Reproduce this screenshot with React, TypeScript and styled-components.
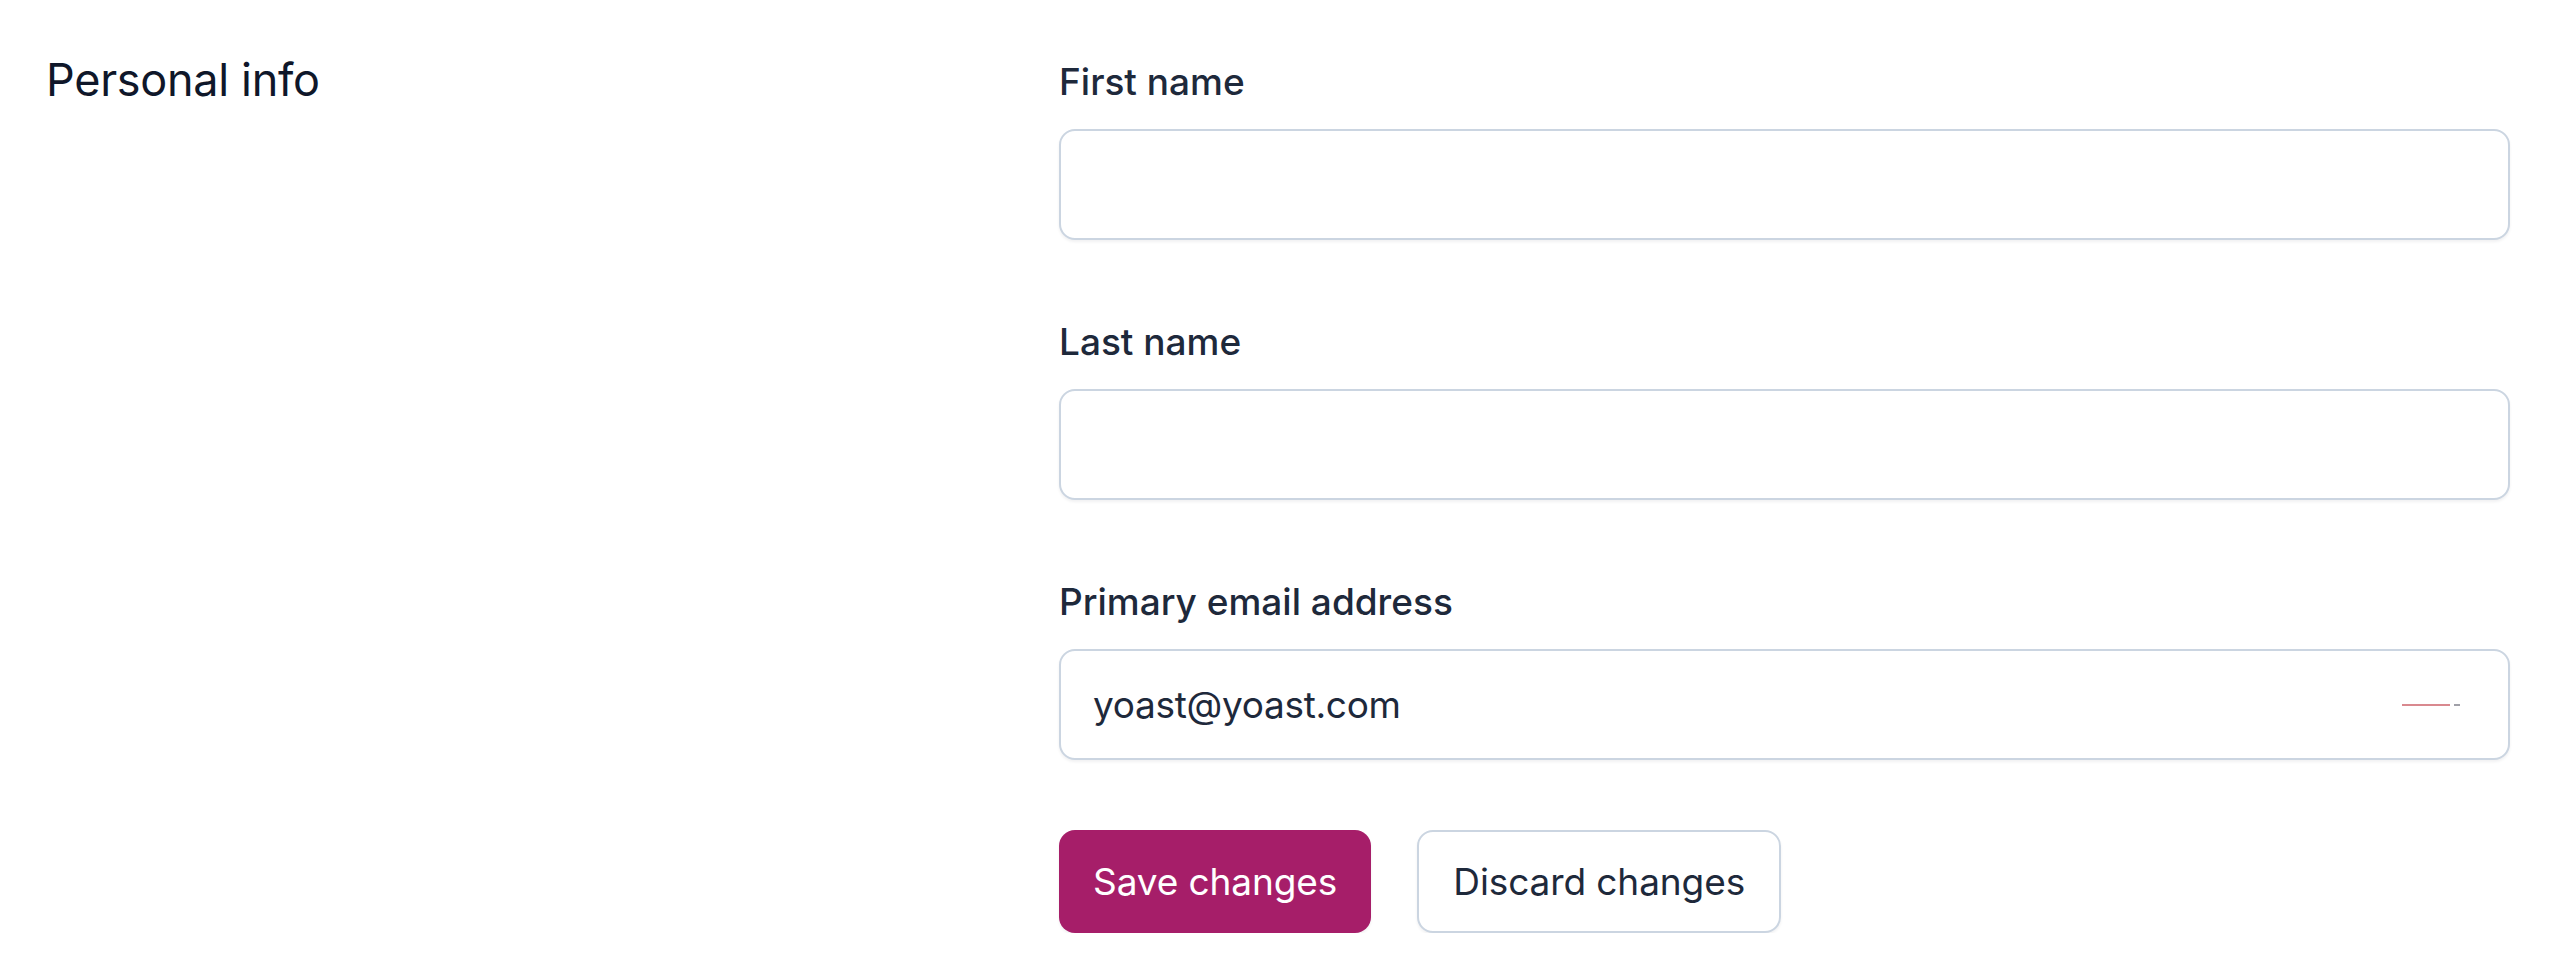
import React from "react";
import styled, { createGlobalStyle } from "styled-components";

const Global = createGlobalStyle`
  html, body { margin: 0; padding: 0; background: #ffffff; }
  body { font-family: Inter, "Noto Sans", Roboto, sans-serif; -webkit-font-smoothing: antialiased; }
  * { box-sizing: border-box; }
`;

const Page = styled.div`
  display: grid;
  grid-template-columns: 1013px 1451px;
  padding: 43px 0 0 46px;
  width: 2560px;
`;

const Heading = styled.h2`
  margin: 0;
  font-size: 45px;
  line-height: 74px;
  font-weight: 400;
  color: #0f172a;
  letter-spacing: -0.3px;
`;

const Form = styled.form`
  display: flex;
  flex-direction: column;
  gap: 75px;
  padding-top: 12px;
`;

const Field = styled.div`
  display: flex;
  flex-direction: column;
  gap: 21px;
`;

const Label = styled.label`
  font-size: 37px;
  line-height: 53px;
  font-weight: 500;
  color: #1e293b;
`;

const InputWrap = styled.div`
  position: relative;
`;

const Input = styled.input`
  display: block;
  width: 100%;
  height: 111px;
  border: 2.6px solid #cbd5e1;
  border-radius: 16px;
  padding: 0 32px;
  font-family: inherit;
  font-size: 37px;
  letter-spacing: -0.3px;
  color: #1e293b;
  background: #ffffff;
  box-shadow: 0 2px 3px rgba(15, 23, 42, 0.06);
  outline: none;
`;

const ManagerMark = styled.svg`
  position: absolute;
  right: 48px;
  top: 50%;
  margin-top: -3px;
  width: 60px;
  height: 6px;
`;

const Actions = styled.div`
  display: flex;
  gap: 46px;
  margin-top: -5px;
`;

const Button = styled.button<{ $primary?: boolean }>`
  height: 103px;
  padding: 0 34px;
  border-radius: 16px;
  font-family: inherit;
  font-size: 37px;
  font-weight: 400;
  letter-spacing: -0.1px;
  cursor: pointer;
  background: ${(p) => (p.$primary ? "#a61e69" : "#ffffff")};
  color: ${(p) => (p.$primary ? "#ffffff" : "#1e293b")};
  border: ${(p) => (p.$primary ? "none" : "2.6px solid #cbd5e1")};
  box-shadow: 0 2px 3px rgba(15, 23, 42, 0.06);
`;

export default function App() {
  return (
    <>
      <Global />
      <Page>
        <Heading>Personal info</Heading>
        <Form onSubmit={(e) => e.preventDefault()}>
          <Field>
            <Label htmlFor="first">First name</Label>
            <InputWrap>
              <Input id="first" type="text" />
            </InputWrap>
          </Field>
          <Field>
            <Label htmlFor="last">Last name</Label>
            <InputWrap>
              <Input id="last" type="text" />
            </InputWrap>
          </Field>
          <Field>
            <Label htmlFor="email">Primary email address</Label>
            <InputWrap>
              <Input id="email" type="email" defaultValue="yoast@yoast.com" />
              <ManagerMark viewBox="0 0 60 6">
                <line x1="0" y1="3" x2="48" y2="3" stroke="#d9898f" strokeWidth="2" />
                <line x1="52" y1="3" x2="58" y2="3" stroke="#a0a0a8" strokeWidth="2" />
              </ManagerMark>
            </InputWrap>
          </Field>
          <Actions>
            <Button type="submit" $primary>Save changes</Button>
            <Button type="button">Discard changes</Button>
          </Actions>
        </Form>
      </Page>
    </>
  );
}
